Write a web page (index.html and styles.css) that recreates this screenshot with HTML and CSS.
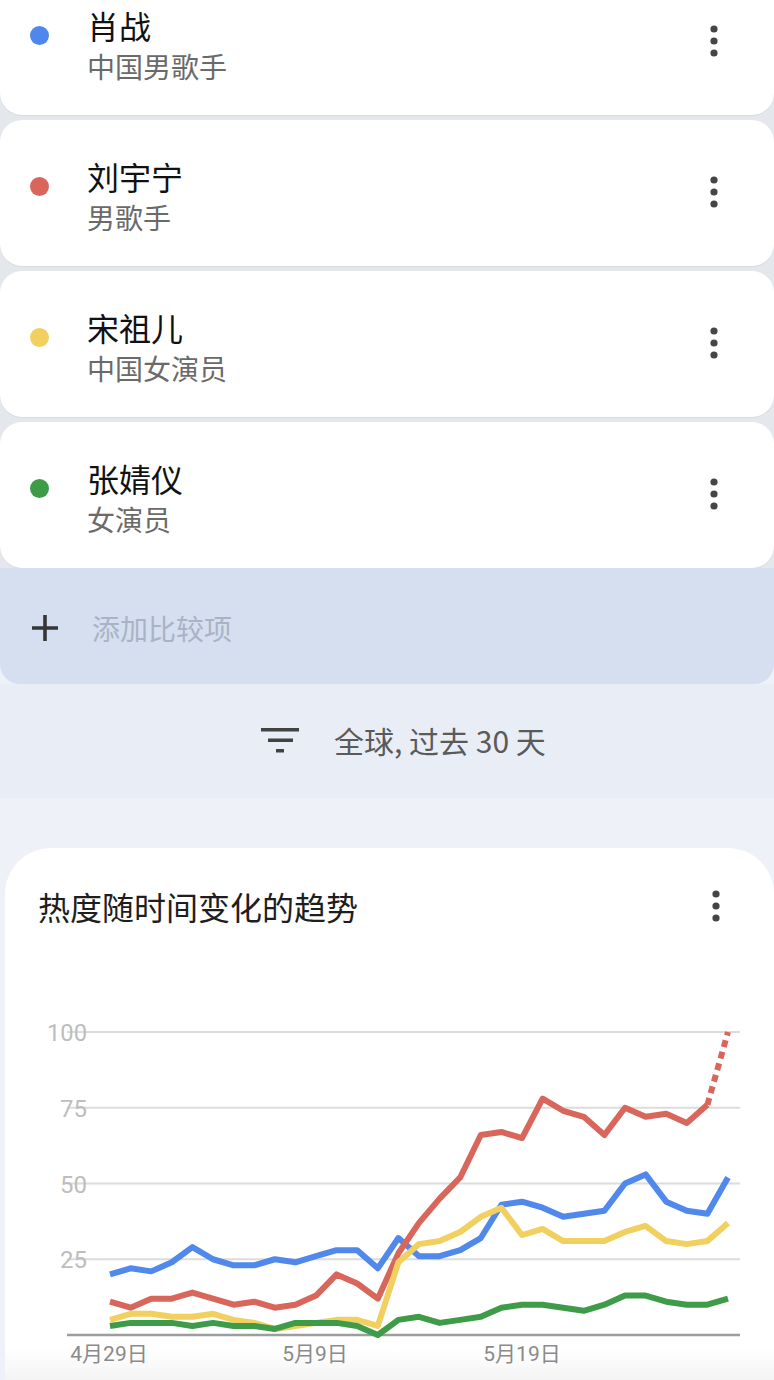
FILE: index.html
```html
<!DOCTYPE html>
<html lang="zh-CN">
<head>
<meta charset="utf-8">
<title>趋势比较</title>
<link rel="stylesheet" href="styles.css">
</head>
<body>
<div class="page">
  <div class="entities">
    <div class="entity">
      <span class="dot dot-blue"></span>
      <div class="entity-text">
        <div class="entity-name">肖战</div>
        <div class="entity-sub">中国男歌手</div>
      </div>
      <svg class="kebab" viewBox="0 0 10 34" width="10" height="34"><circle cx="5" cy="5" r="3.6"/><circle cx="5" cy="17" r="3.6"/><circle cx="5" cy="29" r="3.6"/></svg>
    </div>
    <div class="entity">
      <span class="dot dot-red"></span>
      <div class="entity-text">
        <div class="entity-name">刘宇宁</div>
        <div class="entity-sub">男歌手</div>
      </div>
      <svg class="kebab" viewBox="0 0 10 34" width="10" height="34"><circle cx="5" cy="5" r="3.6"/><circle cx="5" cy="17" r="3.6"/><circle cx="5" cy="29" r="3.6"/></svg>
    </div>
    <div class="entity">
      <span class="dot dot-yellow"></span>
      <div class="entity-text">
        <div class="entity-name">宋祖儿</div>
        <div class="entity-sub">中国女演员</div>
      </div>
      <svg class="kebab" viewBox="0 0 10 34" width="10" height="34"><circle cx="5" cy="5" r="3.6"/><circle cx="5" cy="17" r="3.6"/><circle cx="5" cy="29" r="3.6"/></svg>
    </div>
    <div class="entity">
      <span class="dot dot-green"></span>
      <div class="entity-text">
        <div class="entity-name">张婧仪</div>
        <div class="entity-sub">女演员</div>
      </div>
      <svg class="kebab" viewBox="0 0 10 34" width="10" height="34"><circle cx="5" cy="5" r="3.6"/><circle cx="5" cy="17" r="3.6"/><circle cx="5" cy="29" r="3.6"/></svg>
    </div>
  </div>

  <div class="add-row">
    <svg class="plus" viewBox="0 0 28 28" width="28" height="28"><path d="M14 1v26M1 14h26"/></svg>
    <span class="add-text">添加比较项</span>
  </div>

  <div class="filter-row">
    <svg class="filter-icon" viewBox="0 0 38 25" width="38" height="25"><rect x="0" y="0" width="38" height="3.5"/><rect x="7" y="10.5" width="25" height="3.5"/><rect x="15" y="21" width="8" height="3.5"/></svg>
    <span class="filter-text">全球, 过去 30 天</span>
  </div>

  <div class="chart-card">
    <div class="chart-head">
      <div class="chart-title">热度随时间变化的趋势</div>
      <svg class="kebab" viewBox="0 0 10 34" width="10" height="34"><circle cx="5" cy="5" r="3.6"/><circle cx="5" cy="17" r="3.6"/><circle cx="5" cy="29" r="3.6"/></svg>
    </div>
    <svg class="chart" viewBox="0 0 769 416" width="769" height="416">
      <g class="grid">
        <line x1="62" y1="68" x2="735" y2="68"/>
        <line x1="62" y1="143.75" x2="735" y2="143.75"/>
        <line x1="62" y1="219.5" x2="735" y2="219.5"/>
        <line x1="62" y1="295.25" x2="735" y2="295.25"/>
      </g>
      <line class="baseline" x1="62" y1="371" x2="735" y2="371"/>
      <g class="ylabels">
        <text x="82" y="69" textLength="40" lengthAdjust="spacingAndGlyphs">100</text>
        <text x="82" y="144.75">75</text>
        <text x="82" y="220.5">50</text>
        <text x="82" y="296.25">25</text>
      </g>
      <g class="xlabels">
        <text x="104" y="390">4月29日</text>
        <text x="310" y="390">5月9日</text>
        <text x="517" y="390">5月19日</text>
      </g>
      <g transform="translate(105 371) scale(20.6 -3.03)">
        <polyline class="ln ln-blue" points="0,20 1,22 2,21 3,24 4,29 5,25 6,23 7,23 8,25 9,24 10,26 11,28 12,28 13,22 14,32 15,26 16,26 17,28 18,32 19,43 20,44 21,42 22,39 23,40 24,41 25,50 26,53 27,44 28,41 29,40 30,52"/>
        <polyline class="ln ln-red" points="0,11 1,9 2,12 3,12 4,14 5,12 6,10 7,11 8,9 9,10 10,13 11,20 12,17 13,12 14,27 15,37 16,45 17,52 18,66 19,67 20,65 21,78 22,74 23,72 24,66 25,75 26,72 27,73 28,70 29,76"/>
        <polyline class="ln ln-red ln-dash" points="29,76 30,100"/>
        <polyline class="ln ln-yellow" points="0,5 1,7 2,7 3,6 4,6 5,7 6,5 7,4 8,2 9,3 10,4 11,5 12,5 13,3 14,24 15,30 16,31 17,34 18,39 19,42 20,33 21,35 22,31 23,31 24,31 25,34 26,36 27,31 28,30 29,31 30,37"/>
        <polyline class="ln ln-green" points="0,3 1,4 2,4 3,4 4,3 5,4 6,3 7,3 8,2 9,4 10,4 11,4 12,3 13,0 14,5 15,6 16,4 17,5 18,6 19,9 20,10 21,10 22,9 23,8 24,10 25,13 26,13 27,11 28,10 29,10 30,12"/>
      </g>
    </svg>
  </div>
</div>
</body>
</html>
```

FILE: styles.css
```css
html, body {
  margin: 0;
  padding: 0;
}

body {
  width: 774px;
  height: 1380px;
  overflow: hidden;
  background: #eef1f8;
  font-family: "Noto Sans CJK SC", "Noto Sans", sans-serif;
}

.page {
  display: flex;
  flex-direction: column;
}

.entities {
  display: flex;
  flex-direction: column;
  gap: 5px;
  margin-top: -31px;
  background: #e4e7ec;
}

.entity {
  box-sizing: border-box;
  height: 146px;
  background: #ffffff;
  border-radius: 22px;
  display: flex;
  align-items: flex-start;
  padding-top: 36px;
  box-shadow: 0 1px 1px rgba(0, 0, 0, 0.06);
}

.dot {
  flex: none;
  width: 19px;
  height: 19px;
  border-radius: 50%;
  margin-left: 30px;
  margin-top: 21px;
}

.dot-blue { background: #4f87ec; }
.dot-red { background: #d9655b; }
.dot-yellow { background: #f1d05f; }
.dot-green { background: #3e9c48; }

.entity-text {
  margin-left: 38px;
  display: flex;
  flex-direction: column;
}

.entity-name {
  font-size: 32px;
  line-height: 40px;
  color: #111111;
}

.entity-sub {
  font-size: 28px;
  line-height: 40px;
  margin-top: 1px;
  color: #6a6a6a;
}

.kebab {
  flex: none;
  fill: #454545;
}

.entity .kebab {
  margin-left: auto;
  margin-right: 55px;
  margin-top: 19px;
}

.add-row {
  box-sizing: border-box;
  height: 116px;
  background: #d5dff0;
  border-radius: 0 0 20px 20px;
  display: flex;
  align-items: center;
  padding-left: 31px;
  padding-top: 4px;
}

.plus {
  flex: none;
  stroke: #363636;
  stroke-width: 3.6;
  fill: none;
}

.add-text {
  margin-left: 33px;
  font-size: 28px;
  line-height: 40px;
  color: #a9b3c5;
}

.filter-row {
  box-sizing: border-box;
  height: 114px;
  background: #e9edf6;
  display: flex;
  align-items: center;
  padding-left: 261px;
  padding-bottom: 2px;
}

.filter-icon {
  flex: none;
  fill: #424242;
}

.filter-text {
  margin-left: 35px;
  font-size: 30px;
  line-height: 40px;
  color: #5a5a5a;
}

.chart-card {
  box-sizing: border-box;
  margin-top: 50px;
  margin-left: 5px;
  width: 769px;
  height: 532px;
  border-radius: 46px 46px 0 0;
  background: linear-gradient(to bottom, #ffffff 0, #ffffff 500px, #f4f4f4 532px);
  display: flex;
  flex-direction: column;
}

.chart-head {
  box-sizing: border-box;
  height: 116px;
  display: flex;
  align-items: flex-start;
  padding-top: 38px;
  padding-left: 33px;
}

.chart-title {
  font-size: 32px;
  line-height: 40px;
  color: #1e1e1e;
}

.chart-head .kebab {
  margin-left: auto;
  margin-right: 53px;
  margin-top: 3px;
}

.chart {
  display: block;
  flex: none;
}

.grid line {
  stroke: #dcdcdc;
  stroke-width: 2;
}

.baseline {
  stroke: #9d9d9d;
  stroke-width: 2.5;
}

.ylabels text {
  font-family: Roboto, "Noto Sans", sans-serif;
  font-size: 24px;
  fill: #bdbdbd;
  text-anchor: end;
  dominant-baseline: central;
}

.xlabels text {
  font-family: Roboto, "Noto Sans CJK SC", sans-serif;
  font-size: 21px;
  fill: #8a8a8a;
  text-anchor: middle;
  dominant-baseline: central;
}

.ln {
  fill: none;
  stroke-width: 6;
  stroke-linejoin: round;
  stroke-linecap: butt;
  vector-effect: non-scaling-stroke;
}

.ln-blue { stroke: #5088ec; }
.ln-red { stroke: #d9665b; }
.ln-yellow { stroke: #f1d05f; }
.ln-green { stroke: #3e9c48; }

.ln-dash {
  stroke-dasharray: 7 5;
}
```
